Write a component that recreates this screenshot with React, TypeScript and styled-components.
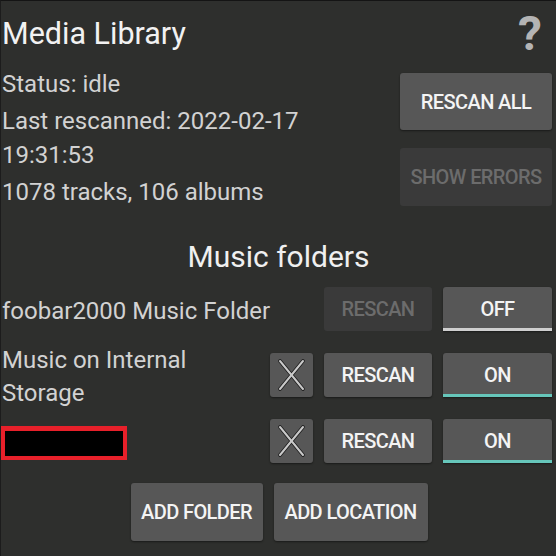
import React from "react";
import styled, { createGlobalStyle } from "styled-components";

const Global = createGlobalStyle`
  html, body { margin: 0; padding: 0; background: #2e2f2d; }
  body { font-family: Roboto, "Noto Sans", sans-serif; }
`;

const Page = styled.div`
  box-sizing: border-box;
  width: 556px;
  height: 556px;
  overflow: hidden;
  background: #2e2f2d;
  border-top: 1px solid #141414;
  border-left: 1px solid #1c1c1c;
  padding: 12px 4px 0 1px;
  display: flex;
  flex-direction: column;
`;

const Header = styled.div`
  display: flex;
  justify-content: space-between;
  align-items: flex-start;
  height: 54px;
`;

const Title = styled.h1`
  margin: 0;
  font-size: 30.5px;
  font-weight: 400;
  line-height: 42px;
  color: #f2f2f2;
`;

const Help = styled.span`
  font-size: 48px;
  font-weight: 700;
  line-height: 46px;
  color: #b4b4b4;
  margin: -2px 10px 0 0;
`;

const Summary = styled.div`
  display: flex;
  justify-content: space-between;
  align-items: flex-start;
`;

const StatusCol = styled.div`
  width: 310px;
  display: flex;
  flex-direction: column;
  gap: 3px;
`;

const StatusText = styled.p`
  margin: 0;
  font-size: 24px;
  line-height: 34px;
  color: #d2d2d2;
`;

const ActionCol = styled.div`
  display: flex;
  flex-direction: column;
  gap: 18px;
  padding-top: 6px;
  width: 152px;
`;

const Button = styled.button<{ $disabled?: boolean; $w?: number; $h?: number }>`
  box-sizing: border-box;
  width: ${(p) => (p.$w ? `${p.$w}px` : "auto")};
  height: ${(p) => p.$h ?? 44}px;
  padding: 0 8px;
  border: none;
  border-radius: 3px;
  background: ${(p) => (p.$disabled ? "#3a3a3a" : "#575757")};
  color: ${(p) => (p.$disabled ? "#6c6c6c" : "#f4f4f4")};
  box-shadow: ${(p) => (p.$disabled ? "none" : "0 1px 2px rgba(0,0,0,0.45)")};
  font-family: Roboto, "Noto Sans", sans-serif;
  font-weight: 500;
  font-size: 20px;
  letter-spacing: -0.6px;
  display: flex;
  align-items: center;
  justify-content: center;
  white-space: nowrap;
  flex-shrink: 0;
`;

const Toggle = styled(Button)<{ $on?: boolean }>`
  width: 109px;
  border-radius: 3px 3px 0 0;
  border-bottom: 3px solid ${(p) => (p.$on ? "#66c6ba" : "#cfcfcf")};
  padding-top: 3px;
`;

const IconButton = styled(Button)`
  width: 43px;
  padding: 0;
`;

const SectionTitle = styled.h2`
  margin: 28px 0 0;
  padding-left: 3px;
  text-align: center;
  font-size: 30px;
  font-weight: 400;
  line-height: 40px;
  color: #f0f0f0;
`;

const Folders = styled.div`
  display: flex;
  flex-direction: column;
  margin-top: -1px;
`;

const FolderRow = styled.div`
  height: 66px;
  display: grid;
  grid-template-columns: 1fr 43px 108px 109px;
  grid-template-rows: 66px;
  column-gap: 11px;
  align-items: center;
`;

const FolderName = styled.div<{ $span?: boolean }>`
  grid-column: ${(p) => (p.$span ? "1 / 3" : "1 / 2")};
  padding-top: 4px;
  font-size: 24px;
  line-height: 33px;
  color: #d2d2d2;
`;

const Redacted = styled.div`
  box-sizing: border-box;
  width: 126px;
  height: 34px;
  margin-left: -1px;
  background: #000;
  border: 4px solid #e8202a;
  border-top-width: 5px;
`;

const Footer = styled.div`
  display: flex;
  justify-content: center;
  gap: 11px;
  margin-top: 9px;
  padding-left: 4px;
`;

const CloseIcon = () => (
  <svg width="43" height="44" viewBox="0 0 43 44">
    <g stroke="#1e1e1e" strokeWidth="3.6" strokeLinecap="round">
      <line x1="10" y1="8" x2="33" y2="36" />
      <line x1="33" y1="8" x2="10" y2="36" />
    </g>
    <g stroke="#c9c9c9" strokeWidth="2" strokeLinecap="round">
      <line x1="10" y1="8" x2="33" y2="36" />
      <line x1="33" y1="8" x2="10" y2="36" />
    </g>
  </svg>
);

export default function App() {
  return (
    <>
      <Global />
      <Page>
        <Header>
          <Title>Media Library</Title>
          <Help>?</Help>
        </Header>
        <Summary>
          <StatusCol>
            <StatusText>Status: idle</StatusText>
            <StatusText>Last rescanned: 2022-02-17 19:31:53</StatusText>
            <StatusText>1078 tracks, 106 albums</StatusText>
          </StatusCol>
          <ActionCol>
            <Button $w={152} $h={57}>RESCAN ALL</Button>
            <Button $w={152} $h={58} $disabled>SHOW ERRORS</Button>
          </ActionCol>
        </Summary>
        <SectionTitle>Music folders</SectionTitle>
        <Folders>
          <FolderRow>
            <FolderName $span>foobar2000 Music Folder</FolderName>
            <Button $w={108} $disabled>RESCAN</Button>
            <Toggle>OFF</Toggle>
          </FolderRow>
          <FolderRow>
            <FolderName>Music on Internal Storage</FolderName>
            <IconButton aria-label="Remove"><CloseIcon /></IconButton>
            <Button $w={108}>RESCAN</Button>
            <Toggle $on>ON</Toggle>
          </FolderRow>
          <FolderRow>
            <FolderName><Redacted /></FolderName>
            <IconButton aria-label="Remove"><CloseIcon /></IconButton>
            <Button $w={108}>RESCAN</Button>
            <Toggle $on>ON</Toggle>
          </FolderRow>
        </Folders>
        <Footer>
          <Button $w={132} $h={58}>ADD FOLDER</Button>
          <Button $w={154} $h={58}>ADD LOCATION</Button>
        </Footer>
      </Page>
    </>
  );
}
